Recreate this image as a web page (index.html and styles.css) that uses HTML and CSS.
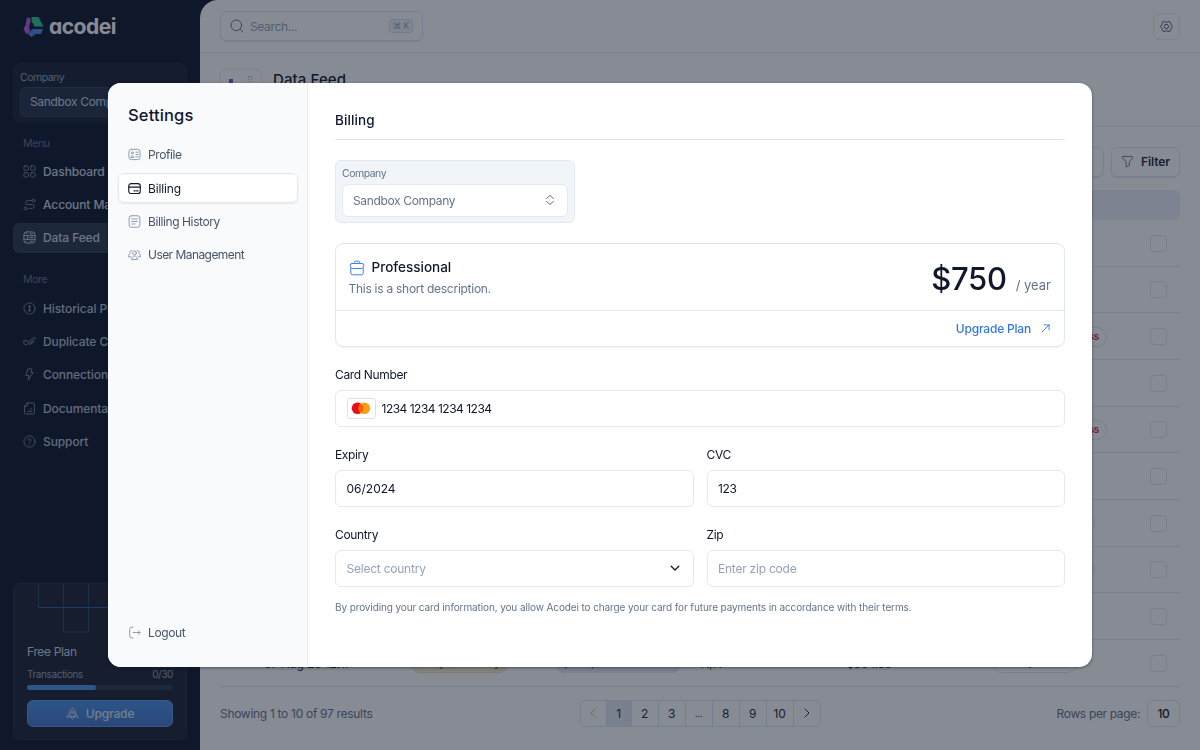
FILE: index.html
```html
<!DOCTYPE html>
<html lang="en">
<head>
  <meta charset="UTF-8">
  <meta name="viewport" content="width=device-width, initial-scale=1.0">
  <title>Acodei - Billing</title>
  <link rel="stylesheet" href="styles.css">
</head>
<body>

  <div class="app">
    <aside class="sidebar">
      <div class="logo">
        <svg width="21" height="22" viewBox="0 0 21 22">
          <path d="M4 1.500l3 .5.8 3.500L6 10.500 7.200 15 3.700 18.500.5 13l2-4z" fill="#b45ce0"/>
          <path d="M8.300 1h7.200L20.500 10.500H11.500L8.800 5.500z" fill="#34c79b"/>
          <path d="M9.500 13h10.500l-2 5h-5.500L8.500 21 5 18z" fill="#4a86e8"/>
        </svg>
        <span>acodei</span>
      </div>

      <div class="company-box">
        <div class="company-label">Company</div>
        <div class="company-value">Sandbox Company</div>
      </div>

      <div class="nav-title">Menu</div>
      <nav class="nav">
        <a class="nav-item">
          <svg class="icon" viewBox="0 0 14 14"><rect x="1" y="1" width="4.700" height="4.700" rx="1"/><rect x="8.300" y="1" width="4.700" height="4.700" rx="1"/><rect x="1" y="8.300" width="4.700" height="4.700" rx="1"/><rect x="8.300" y="8.300" width="4.700" height="4.700" rx="1"/></svg>
          Dashboard
        </a>
        <a class="nav-item">
          <svg class="icon" viewBox="0 0 14 14"><circle cx="11.200" cy="2.800" r="1.600"/><circle cx="2.800" cy="11.200" r="1.600"/><path d="M9.600 2.800H5a2.100 2.100 0 0 0 0 4.200h5a2.100 2.100 0 0 1 0 4.200H6.800"/></svg>
          Account Mapping
        </a>
        <a class="nav-item active">
          <svg class="icon" viewBox="0 0 14 14"><rect x="1" y="1" width="12" height="12" rx="3"/><path d="M1 5h12M1 9h12M5 5v4M3.500 3h.5M7.500 3h3M7.500 7h3M3.500 11h.5M7.500 11h3"/></svg>
          Data Feed
        </a>
      </nav>

      <div class="nav-title more">More</div>
      <nav class="nav dim">
        <a class="nav-item">
          <svg class="icon" viewBox="0 0 14 14"><circle cx="7" cy="7" r="6"/><path d="M7 4v6M5.700 5.300L7 4l1.300 1.300M5.700 8.700L7 10l1.300-1.300"/></svg>
          Historical Processing
        </a>
        <a class="nav-item">
          <svg class="icon" viewBox="0 0 14 14"><path d="M.9 7v1.500a2.200 2.200 0 0 0 3.800 1.500L12.500 5c1.300-1.300.2-2.800-1.300-2L5.500 7.500 3.500 5.800C2.500 5.300 1 6 .9 7zM7 10.500l4.500-3M3.500 5.800L4.500 7"/></svg>
          Duplicate Checker
        </a>
        <a class="nav-item">
          <svg class="icon" viewBox="0 0 14 14"><path d="M5.500 1h4L8.400 4.800H11L5.500 13l.8-5H3.500z"/></svg>
          Connections
        </a>
        <a class="nav-item">
          <svg class="icon" viewBox="0 0 14 14"><path d="M5 1h5.500A1.800 1.800 0 0 1 12.300 2.800v8.400A1.800 1.800 0 0 1 10.500 13h-7a1.800 1.800 0 0 1-1.800-1.800V4.500zM5 1v2a1.500 1.500 0 0 1-1.500 1.500H1.700M5 10h4.500M8 7.500h1.500"/></svg>
          Documentation
        </a>
        <a class="nav-item">
          <svg class="icon" viewBox="0 0 14 14"><circle cx="7" cy="7" r="6"/><path d="M5.400 5.500a1.600 1.600 0 1 1 2.300 1.400c-.5.300-.7.500-.7 1.100M7 9.800v.3"/></svg>
          Support
        </a>
      </nav>

      <div class="plan-box">
        <svg class="plan-grid" width="172" height="50" viewBox="0 0 172 50">
          <path d="M24.500 0v24M49.500 0v48h25V0M99.500 0v24" stroke="#33435f"/>
          <path d="M24.500 23.500H172" stroke="#2d5cab"/>
        </svg>
        <div class="plan-name">Free Plan</div>
        <div class="plan-usage"><span>Transactions</span><span>0/30</span></div>
        <div class="progress"><div class="progress-bar" style="width: 47.500%"></div></div>
        <button class="upgrade-btn">
          <svg class="icon" viewBox="0 0 14 14"><path d="M4.300 10V5.500C4.300 3.500 5.500 2 7 1c1.500 1 2.700 2.500 2.700 4.500V10zM4.300 6.500L1.300 9.500V11.500l3-1.500M9.700 6.500l3 3v2l-3-1.500M5.800 10v2L7 13l1.200-1v-2"/><circle cx="7" cy="5.500" r="1"/></svg>
          Upgrade
        </button>
      </div>
    </aside>

    <main class="main">
      <header class="topbar">
        <div class="search">
          <svg width="14" height="14" viewBox="0 0 14 14"><circle cx="6.300" cy="6.300" r="5.300"/><path d="M10.300 10.300L13 13"/></svg>
          <span>Search...</span>
          <kbd>⌘ K</kbd>
        </div>
        <button class="gear-btn">
          <svg width="13" height="13" viewBox="0 0 14 14"><path d="M4.300 1.500L6 2.300h2l1.700-.8 1.800 1.200.2 1.800L13.300 7l-1.600 2.500-.2 1.800-1.800 1.200-1.700-.8H6l-1.700.8-1.800-1.200-.2-1.800L.7 7l1.600-2.500.2-1.800z"/><path d="M5.800 4.900h2.400L9.400 7 8.200 9.100H5.800L4.600 7z"/></svg>
        </button>
      </header>

      <section class="page-head">
        <div class="page-icon"><i class="square"></i><i class="dots"></i></div>
        <h1>Data Feed</h1>
      </section>

      <section class="content">
        <div class="toolbar">
          <button class="tool-btn wide"></button>
          <button class="tool-btn">
            <svg width="13" height="13" viewBox="0 0 14 14"><path d="M2.300 1.500h9.400c.8 0 1.200.9.700 1.500L9 7.300v3.800L5.500 13V7.300L1.600 3c-.5-.6-.1-1.500.7-1.500z"/></svg>
            Filter
          </button>
        </div>

        <div class="table-head"></div>
        <div class="row"><span class="status"></span><i class="check"></i></div>
        <div class="row"><span class="status"></span><i class="check"></i></div>
        <div class="row"><span class="status"><b class="chip failed">Unsuccess</b></span><i class="check"></i></div>
        <div class="row"><span class="status"></span><i class="check"></i></div>
        <div class="row"><span class="status"><b class="chip failed">Unsuccess</b></span><i class="check"></i></div>
        <div class="row"><span class="status"></span><i class="check"></i></div>
        <div class="row"><span class="status"><b class="chip medium">Successful</b></span><i class="check"></i></div>
        <div class="row"><span class="status"><b class="chip medium">Successful</b></span><i class="check"></i></div>
        <div class="row"><span class="status"></span><i class="check"></i></div>
        <div class="row full">
          <span></span>
          <span class="date">07 Aug 23 12:17</span>
          <span><b class="chip summary">Daily Summary</b></span>
          <span><b class="chip payout">po_1npwmvrezmtwma</b></span>
          <span>N/A</span>
          <span>$564.33</span>
          <span><b class="chip last">Not Synced</b></span>
          <i class="check"></i>
        </div>

        <footer class="table-foot">
          <div class="results">Showing 1 to 10 of 97 results</div>
          <div class="pages">
            <span class="prev"><svg width="6" height="10" viewBox="0 0 6 10"><path d="M5 1L1 5l4 4"/></svg></span>
            <span class="current">1</span>
            <span>2</span>
            <span>3</span>
            <span class="gap">...</span>
            <span>8</span>
            <span>9</span>
            <span>10</span>
            <span><svg width="6" height="10" viewBox="0 0 6 10"><path d="M1 1l4 4-4 4"/></svg></span>
          </div>
          <div class="per-page"><span>Rows per page:</span><span class="per-page-box">10</span></div>
        </footer>
      </section>
    </main>
  </div>

  <!-- Settings modal -->
  <div class="overlay">
    <div class="modal">
      <aside class="settings">
        <h2>Settings</h2>
        <a class="settings-item">
          <svg class="icon" viewBox="0 0 14 14"><rect x="1" y="1.500" width="12" height="11" rx="2.500"/><circle cx="4.700" cy="5.200" r="1.100"/><path d="M3 9.800c0-2 3.400-2 3.400 0zM8.500 4.500H11M8.500 7H11M8.500 9.500H11"/></svg>
          Profile
        </a>
        <a class="settings-item active">
          <svg class="icon" viewBox="0 0 14 14"><rect x=".8" y="1.800" width="12.400" height="10.600" rx="2.500"/><path d="M.8 5.500h12.400M6.500 9.500h1.300M9.300 9.500h1.500"/></svg>
          Billing
        </a>
        <a class="settings-item">
          <svg class="icon" viewBox="0 0 14 14"><rect x="1.200" y=".8" width="11.600" height="12.400" rx="2.500"/><path d="M4 4.300h6M4 7h6M4 9.700h3.500"/></svg>
          Billing History
        </a>
        <a class="settings-item users">
          <svg class="icon" viewBox="0 0 14 14"><circle cx="7" cy="5.200" r="2"/><path d="M3.800 12c0-4.700 6.400-4.700 6.400 0zM4 2.600a1.700 1.700 0 0 0-1.300 3C1.300 6.300.6 7.500.6 9.500h2.200M10 2.600a1.700 1.700 0 0 1 1.300 3c1.400.7 2.100 1.900 2.100 3.900h-2.200"/></svg>
          User Management
        </a>
        <a class="settings-item logout">
          <svg class="icon" viewBox="0 0 14 14"><path d="M5.500 1.200H4.300A2.500 2.500 0 0 0 1.800 3.700v6.600a2.500 2.500 0 0 0 2.500 2.500h1.200M5.500 7H13M11 5l2 2-2 2"/></svg>
          Logout
        </a>
      </aside>

      <section class="billing">
        <h3>Billing</h3>

        <div class="company-picker">
          <div class="picker-label">Company</div>
          <div class="picker">
            <span>Sandbox Company</span>
            <svg width="10" height="12" viewBox="0 0 10 12"><path d="M1.500 4.500L5 1.500l3.500 3M1.500 7.500L5 10.500l3.500-3"/></svg>
          </div>
        </div>

        <div class="plan-card">
          <div class="plan-top">
            <div>
              <div class="plan-title">
                <svg width="16" height="16" viewBox="0 0 16 16"><path d="M3 3.500h10A1.800 1.800 0 0 1 14.800 5.500l-.6 1.800c-.2.700-.8 1.200-1.500 1.200H3.300c-.7 0-1.300-.5-1.500-1.200L1.200 5.500A1.800 1.800 0 0 1 3 3.500zM1.800 8v5A1.800 1.800 0 0 0 3.600 14.800h8.800A1.800 1.800 0 0 0 14.200 13V8M5.300 3.500V2.500a1.300 1.300 0 0 1 1.300-1.300h2.800a1.300 1.300 0 0 1 1.300 1.300v1"/></svg>
                Professional
              </div>
              <div class="plan-desc">This is a short description.</div>
            </div>
            <div class="price"><span class="amount">$750</span><span class="period">/ year</span></div>
          </div>
          <div class="plan-bottom">
            <a>Upgrade Plan</a>
            <svg width="9" height="9" viewBox="0 0 10 10"><path d="M1 9l8-8M3.500 1H9v5.500"/></svg>
          </div>
        </div>

        <div class="field card-field">
          <label>Card Number</label>
          <div class="input">
            <span class="mastercard">
              <svg width="20" height="13" viewBox="0 0 20 13"><circle cx="6.500" cy="6.300" r="5.800" fill="#e8101c"/><circle cx="13.300" cy="6.300" r="5.800" fill="#f79e1b"/><path d="M9.900 1.600a5.800 5.800 0 0 1 0 9.400 5.800 5.800 0 0 1 0-9.400z" fill="#ff5f00"/></svg>
            </span>
            <span class="card-digits">1234 1234 1234 1234</span>
          </div>
        </div>

        <div class="field-grid">
          <div class="field">
            <label>Expiry</label>
            <div class="input expiry">06/2024</div>
          </div>
          <div class="field">
            <label>CVC</label>
            <div class="input cvc">123</div>
          </div>
          <div class="field">
            <label>Country</label>
            <div class="input placeholder">
              <span>Select country</span>
              <svg width="10" height="7" viewBox="0 0 10 7"><path d="M1.200 1.200L5 5l3.800-3.800"/></svg>
            </div>
          </div>
          <div class="field">
            <label>Zip</label>
            <div class="input placeholder">Enter zip code</div>
          </div>
        </div>

        <p class="terms">By providing your card information, you allow Acodei to charge your card for future payments in accordance with their terms.</p>
      </section>
    </div>
  </div>

</body>
</html>
```

FILE: styles.css
```css
* {
  margin: 0;
  padding: 0;
  box-sizing: border-box;
}

body {
  font-family: Inter, 'Liberation Sans', sans-serif;
  font-size: 12px;
  letter-spacing: -0.35px;
  height: 750px;
  overflow: hidden;
  background: #0f172a;
  color: #0f172a;
}

button {
  font: inherit;
  background: none;
}

svg {
  fill: none;
  stroke: currentColor;
  stroke-linecap: round;
  stroke-linejoin: round;
  flex-shrink: 0;
}

.icon {
  width: 13px;
  height: 13px;
}

.app {
  display: flex;
  height: 750px;
}

/* Sidebar */
.sidebar {
  width: 200px;
  padding: 0 13px 10px;
  display: flex;
  flex-direction: column;
  color: #cbd5e1;
}

.logo {
  display: flex;
  align-items: center;
  gap: 5px;
  height: 53px;
  padding-left: 10px;
  font-size: 21px;
  font-weight: 700;
  letter-spacing: -0.5px;
  color: #fff;
  font-feature-settings: "cv11";
}

.logo svg {
  stroke: none;
}

.company-box {
  height: 60px;
  margin-top: 10px;
  padding: 7px 6px;
  border: 1px solid #1b2639;
  border-radius: 7px;
  background: #182234;
}

.company-label {
  font-size: 10.500px;
  line-height: 13px;
  letter-spacing: -0.5px;
  color: #94a3b8;
}

.company-value {
  height: 30px;
  margin-top: 3px;
  padding-left: 9px;
  border: 1px solid #334155;
  border-radius: 5px;
  background: #263348;
  line-height: 28px;
  white-space: nowrap;
  overflow: hidden;
}

.nav-title {
  margin-top: 14px;
  padding-left: 10px;
  font-size: 10.500px;
  line-height: 14px;
  color: #64748b;
}

.nav-title.more {
  margin-top: 20.500px;
}

.nav {
  display: flex;
  flex-direction: column;
  gap: 3.330px;
  margin-top: 5px;
}

.nav.dim {
  margin-top: 6px;
}

.nav-item {
  display: flex;
  align-items: center;
  gap: 7px;
  height: 30px;
  padding-left: 9px;
  border: 1px solid transparent;
  border-radius: 6px;
  font-weight: 500;
  letter-spacing: -0.1px;
  white-space: nowrap;
}

.nav-item .icon {
  color: #7c8ba1;
}

.nav.dim .nav-item {
  color: #b3bfcd;
}

.nav-item.active {
  background: #2a374b;
  border-color: #2f3d51;
}

.nav-item.active .icon {
  color: #cbd5e1;
}

.plan-box {
  height: 157px;
  margin-top: auto;
  padding: 0 13px;
  border: 1px solid #222e42;
  border-radius: 7px;
  background: #1a2335;
}

.plan-grid {
  display: block;
  margin-left: -13px;
}

.plan-name {
  margin-top: 10px;
  line-height: 16px;
}

.plan-usage {
  display: flex;
  justify-content: space-between;
  margin-top: 8px;
  font-size: 10px;
  line-height: 13px;
  letter-spacing: -0.4px;
  color: #94a3b8;
}

.progress {
  height: 5px;
  margin-top: 4px;
  border-radius: 3px;
  background: #2b374a;
}

.progress-bar {
  height: 5px;
  border-radius: 3px;
  background: #4f93ea;
}

.upgrade-btn {
  display: flex;
  align-items: center;
  justify-content: center;
  gap: 7px;
  width: 100%;
  height: 27px;
  margin-top: 10px;
  border: 1px solid #5a99ec;
  border-radius: 6px;
  background: linear-gradient(#4a90e8, #4378c8);
  color: #dbe4f0;
  font-weight: 500;
  letter-spacing: -0.15px;
}

/* Main page */
.main {
  width: 1000px;
  border-top-left-radius: 18px;
  background: #fff;
}

.topbar {
  display: flex;
  align-items: center;
  justify-content: space-between;
  height: 53px;
  padding: 0 20px;
  border-bottom: 1px solid #e8edf4;
}

.search {
  display: flex;
  align-items: center;
  gap: 6px;
  width: 203px;
  height: 30px;
  padding: 0 9px;
  border: 1px solid #e2e8f0;
  border-radius: 6px;
  box-shadow: 0 1px 1px rgba(15, 23, 42, 0.1);
  color: #94a3b8;
}

.search svg {
  color: #64748b;
}

.search kbd {
  margin-left: auto;
  padding: 0 3px;
  border: 1px solid #d9e0ea;
  border-radius: 3px;
  background: #f1f5f9;
  font-family: Inter, 'DejaVu Sans', sans-serif;
  font-size: 8.500px;
  line-height: 12px;
  letter-spacing: -0.1px;
}

.gear-btn {
  display: flex;
  align-items: center;
  justify-content: center;
  width: 27px;
  height: 27px;
  border: 1px solid #e6ebf2;
  border-radius: 6px;
  color: #475569;
}

.page-head {
  display: flex;
  gap: 11px;
  height: 73.500px;
  padding: 15px 19px 0;
  border-bottom: 1px solid #e8edf4;
}

.page-icon {
  display: flex;
  gap: 15px;
  width: 43px;
  height: 43px;
  padding: 6px 8px;
  border: 2px solid #f3f5f9;
  border-radius: 8px;
}

.page-icon .square {
  width: 6px;
  height: 9px;
  margin-top: 3px;
  background: #8b45d8;
}

.page-icon .dots {
  width: 6px;
  height: 10px;
  border: 1px dotted #bcc5d2;
}

.page-head h1 {
  margin-top: 3px;
  font-size: 15px;
  line-height: 18px;
  letter-spacing: 0.100px;
  font-weight: 500;
}

.content {
  padding: 20px 20px 0;
}

.toolbar {
  display: flex;
  justify-content: flex-end;
  gap: 7px;
  margin-bottom: 13.500px;
}

.tool-btn {
  display: flex;
  align-items: center;
  gap: 7px;
  width: 69px;
  height: 30px;
  padding-left: 9px;
  border: 1px solid #e2e8f0;
  border-radius: 6px;
  box-shadow: 0 1px 1px rgba(15, 23, 42, 0.1);
  font-weight: 600;
  letter-spacing: -0.1px;
  color: #1e293b;
}

.tool-btn.wide {
  width: 90px;
}

.tool-btn svg {
  color: #64748b;
}

.table-head {
  height: 30px;
  border-radius: 6px;
  background: #eceff8;
}

.row {
  display: grid;
  grid-template-columns: 772px 158px 30px;
  align-items: center;
  height: 46.670px;
  padding-top: 1px;
  border-bottom: 1px solid #e2e7ef;
}

.row .status {
  grid-column: 2;
}

.row.full {
  grid-template-columns: 44px repeat(5, 145.600px) 158px 30px;
}

.row .date {
  letter-spacing: -0.1px;
}

.row .check {
  width: 17px;
  height: 17px;
  border: 1px solid #e0e5ec;
  border-radius: 4px;
}

.chip {
  display: inline-block;
  height: 20px;
  padding: 0 8px;
  border: 1px solid #dfe5ed;
  border-radius: 10px;
  font-size: 11px;
  font-weight: 500;
  line-height: 17px;
  white-space: nowrap;
  vertical-align: middle;
}

.chip.failed {
  width: 115px;
  padding-right: 7px;
  text-align: right;
  font-size: 10.500px;
  font-weight: 600;
  color: #d6304a;
}

.chip.medium {
  width: 103px;
}

.chip.summary {
  width: 99px;
  border-color: #f3ddb6;
  background: #fbecd0;
  color: #8a5a18;
  font-size: 12px;
}

.chip.payout {
  width: 127px;
  border-color: #e4e9f1;
  background: #e4e9f1;
}

.chip.last {
  width: 85px;
}

.table-foot {
  display: flex;
  align-items: center;
  justify-content: space-between;
  margin-top: 13px;
  height: 27px;
  color: #64748b;
}

.results {
  width: 359px;
  letter-spacing: -0.3px;
}

.pages {
  display: flex;
  width: 241px;
  height: 27px;
  border: 1px solid #dde3ec;
  border-radius: 5px;
  color: #1e293b;
}

.pages span {
  display: flex;
  align-items: center;
  justify-content: center;
  width: 27px;
  border-left: 1px solid #dde3ec;
}

.pages .prev {
  width: 25px;
  border-left: none;
  color: #b4becc;
}

.pages .current {
  width: 25px;
  background: #e2e8f4;
}

.pages .gap {
  font-size: 10px;
}

.per-page {
  display: flex;
  align-items: center;
  justify-content: flex-end;
  gap: 7px;
  width: 359px;
}

.per-page-box {
  width: 33px;
  height: 27px;
  border: 1px solid #dde3ec;
  border-radius: 6px;
  line-height: 25px;
  text-align: center;
  font-weight: 500;
  color: #0f172a;
}

/* Modal */
.overlay {
  position: fixed;
  inset: 0;
  display: flex;
  align-items: center;
  justify-content: center;
  background: rgba(15, 23, 42, 0.5);
}

.modal {
  display: flex;
  width: 984px;
  height: 584px;
  border-radius: 13px;
  background: #fff;
  overflow: hidden;
  box-shadow: 0 1px 3px rgba(15, 23, 42, 0.5);
}

.settings {
  display: flex;
  flex-direction: column;
  gap: 3.330px;
  width: 200px;
  padding: 20px 9px 20px 10px;
  border-right: 1px solid #e8edf3;
  background: #f8fafc;
}

.settings h2 {
  padding-left: 10px;
  margin-bottom: 9.500px;
  font-size: 16.500px;
  line-height: 24px;
  letter-spacing: 0.150px;
  font-weight: 500;
}

.settings-item {
  display: flex;
  align-items: center;
  gap: 7px;
  height: 30px;
  padding-left: 9px;
  border: 1px solid transparent;
  border-radius: 6px;
  letter-spacing: -0.4px;
  color: #475569;
}

.settings-item.users {
  letter-spacing: -0.55px;
}

.settings-item .icon {
  color: #8496b0;
}

.settings-item.active {
  border-color: #e2e8f0;
  background: #fff;
  box-shadow: 0 1px 2px rgba(15, 23, 42, 0.08);
  letter-spacing: -0.15px;
  color: #0f172a;
}

.settings-item.active .icon {
  color: #0f172a;
  stroke-width: 1.200;
}

.settings-item.logout {
  margin-top: auto;
}

.billing {
  flex: 1;
  padding: 26px 27px 0 27px;
}

.billing h3 {
  height: 31px;
  border-bottom: 1px solid #e2e8f0;
  font-size: 13.500px;
  line-height: 22px;
  letter-spacing: 0.100px;
  font-weight: 500;
}

.company-picker {
  width: 240px;
  height: 63px;
  margin-top: 20px;
  padding: 6px;
  border: 1px solid #e2e8f0;
  border-radius: 6px;
  background: #f1f5f9;
}

.picker-label {
  font-size: 10.500px;
  line-height: 14px;
  letter-spacing: -0.5px;
  color: #64748b;
}

.picker {
  display: flex;
  align-items: center;
  justify-content: space-between;
  height: 33px;
  margin-top: 2.500px;
  padding: 0 12px 0 10px;
  border: 1px solid #e2e8f0;
  border-radius: 6px;
  background: #fff;
  color: #64748b;
}

.plan-card {
  height: 104px;
  margin-top: 20px;
  border: 1px solid #e2e8f0;
  border-radius: 8px;
  box-shadow: 0 1px 1px rgba(15, 23, 42, 0.04);
}

.plan-top {
  display: flex;
  justify-content: space-between;
  height: 67px;
  padding: 14px 13px 0 12.500px;
  border-bottom: 1px solid #e2e8f0;
}

.plan-title {
  display: flex;
  align-items: center;
  gap: 7px;
  font-size: 13.500px;
  line-height: 19px;
  letter-spacing: 0;
  font-weight: 500;
}

.plan-title svg {
  color: #3b82f6;
}

.plan-desc {
  margin-top: 4px;
  line-height: 16px;
  letter-spacing: -0.27px;
  color: #64748b;
}

.price {
  display: flex;
  align-items: baseline;
  gap: 9px;
  letter-spacing: 0;
}

.amount {
  font-size: 31px;
  line-height: 42px;
  letter-spacing: -0.3px;
  font-weight: 500;
}

.period {
  font-size: 13px;
  color: #64748b;
}

.plan-bottom {
  display: flex;
  align-items: center;
  justify-content: flex-end;
  gap: 10px;
  height: 35px;
  padding-right: 14px;
  color: #3478dc;
  font-weight: 500;
  letter-spacing: -0.2px;
}

.field label {
  display: block;
  height: 23px;
  line-height: 16px;
}

.card-field {
  margin-top: 20px;
}

.input {
  display: flex;
  align-items: center;
  gap: 6px;
  height: 37px;
  padding: 0 11px 0 10.500px;
  border: 1px solid #e2e8f0;
  border-radius: 6px;
}

.input.expiry {
  letter-spacing: 0;
}

.card-digits {
  letter-spacing: -0.5px;
  word-spacing: 0;
}

.input.placeholder {
  justify-content: space-between;
  letter-spacing: -0.23px;
  color: #94a3b8;
}

.input svg {
  margin-right: 2px;
}

.input.placeholder svg {
  color: #0f172a;
  stroke-width: 1.300;
}

.mastercard {
  display: flex;
  align-items: center;
  justify-content: center;
  width: 29px;
  height: 21px;
  border: 1px solid #dbe2ea;
  border-radius: 3px;
}

.input .mastercard svg {
  margin: 0;
  stroke: none;
}

.field-grid {
  display: grid;
  grid-template-columns: 1fr 1fr;
  gap: 20px 13px;
  margin-top: 20px;
}

.terms {
  margin-top: 11.500px;
  font-size: 10px;
  line-height: 16px;
  letter-spacing: -0.11px;
  color: #64748b;
  white-space: nowrap;
}
```
